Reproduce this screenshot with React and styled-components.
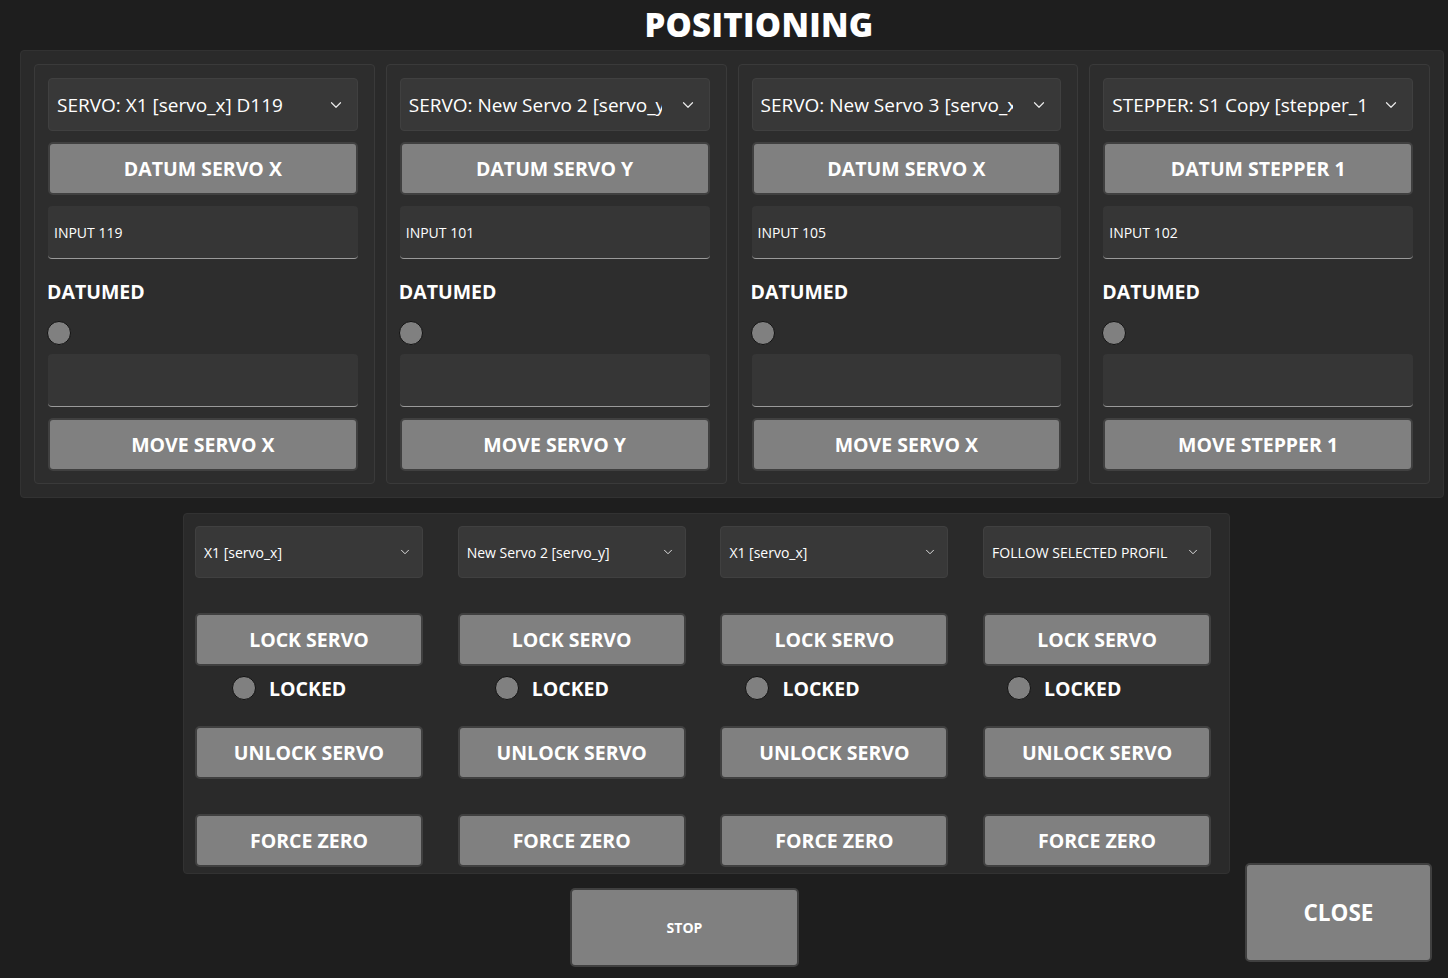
import React from "react";
import styled, { createGlobalStyle } from "styled-components";
import { ChevronDown } from "lucide-react";

const Global = createGlobalStyle`
  html, body { margin: 0; padding: 0; background: #1e1e1e; }
  body { font-family: "Open Sans", "Noto Sans", sans-serif; color: #fff; }
  * { box-sizing: border-box; }
`;

const Page = styled.div`
  width: 1448px;
  height: 978px;
  overflow: hidden;
  display: flex;
  flex-direction: column;
`;

const Title = styled.h1`
  margin: 0;
  height: 50px;
  padding-left: 70px;
  text-align: center;
  font-size: 33px;
  font-weight: 800;
  line-height: 50px;
  letter-spacing: 0.3px;
  color: #fff;
`;

const TopPanel = styled.div`
  margin: 0 4px 0 20px;
  padding: 13px 13px;
  background: #2a2a2a;
  border: 1px solid #323232;
  border-radius: 4px;
  display: grid;
  grid-template-columns: repeat(4, minmax(0, 1fr));
  column-gap: 11px;
`;

const Card = styled.div`
  min-width: 0;
  background: #2d2d2d;
  border: 1px solid #3a3a3a;
  border-radius: 4px;
  padding: 13px 16px 12px 13px;
  display: flex;
  flex-direction: column;
`;

const Select = styled.div`
  height: ${(p) => p.$h || 53}px;
  background: #383838;
  border: 1px solid #404040;
  border-radius: 4px;
  display: flex;
  align-items: center;
  padding: 0 ${(p) => p.$pr || 12}px 0 8px;
  font-size: ${(p) => p.$fs || 19}px;
  color: #fff;
  white-space: nowrap;
  overflow: hidden;
  svg { flex: none; color: #e8e8e8; }
`;

const SelectText = styled.span`
  overflow: hidden;
  flex: 1;
  min-width: 0;
  margin-right: ${(p) => p.$gap || 17}px;
`;

const Button = styled.div`
  height: ${(p) => p.$h || 53}px;
  margin-top: ${(p) => p.$mt || 0}px;
  background: #808080;
  border: 2px solid #404040;
  border-radius: 5px;
  display: flex;
  align-items: center;
  justify-content: center;
  font-size: ${(p) => p.$fs || 19.5}px;
  font-weight: 700;
  color: #fff;
  white-space: nowrap;
`;

const Input = styled.div`
  height: 53px;
  margin-top: ${(p) => p.$mt || 0}px;
  background: #363636;
  border-radius: 4px;
  border-bottom: 1px solid #9a9a9a;
  display: flex;
  align-items: center;
  padding-left: 6px;
  font-size: 14px;
  color: #fff;
`;

const Label = styled.div`
  margin-top: 20px;
  margin-left: -1px;
  height: 26px;
  line-height: 26px;
  font-size: 19.5px;
  font-weight: 700;
  color: #fff;
`;

const Led = styled.div`
  width: 24px;
  height: 24px;
  border-radius: 50%;
  background: #808080;
  border: 1.5px solid #111;
  flex: none;
  margin-top: ${(p) => p.$mt || 0}px;
  margin-left: ${(p) => p.$ml || 0}px;
`;

const BottomPanel = styled.div`
  margin: 15px 0 0 183px;
  width: 1047px;
  padding: 12px 18px 6px 11px;
  background: #2a2a2a;
  border: 1px solid #323232;
  border-radius: 4px;
  display: grid;
  grid-template-columns: repeat(4, 228px);
  column-gap: 34.7px;
`;

const Column = styled.div`
  display: flex;
  flex-direction: column;
  min-width: 0;
`;

const LockRow = styled.div`
  height: 24px;
  margin-top: 10px;
  padding-left: ${(p) => p.$pl}px;
  display: flex;
  align-items: center;
  gap: 13px;
  font-size: 19.5px;
  font-weight: 700;
`;

const Footer = styled.div`
  display: flex;
  align-items: flex-start;
`;

const Stop = styled(Button)`
  width: 229px;
  height: 79px;
  margin: 14px 0 0 570px;
  font-size: 14px;
`;

const Close = styled(Button)`
  width: 187px;
  height: 99px;
  margin: -11px 0 0 446px;
  font-size: 22.5px;
`;

const cards = [
  { sel: "SERVO: X1 [servo_x] D119", datum: "DATUM SERVO X", input: "INPUT 119", move: "MOVE SERVO X" },
  { sel: "SERVO: New Servo 2 [servo_y]", datum: "DATUM SERVO Y", input: "INPUT 101", move: "MOVE SERVO Y" },
  { sel: "SERVO: New Servo 3 [servo_x]", datum: "DATUM SERVO X", input: "INPUT 105", move: "MOVE SERVO X" },
  { sel: "STEPPER: S1 Copy [stepper_1]", datum: "DATUM STEPPER 1", input: "INPUT 102", move: "MOVE STEPPER 1" },
];

const cols = [
  { sel: "X1 [servo_x]", pl: 37 },
  { sel: "New Servo 2 [servo_y]", pl: 37 },
  { sel: "X1 [servo_x]", pl: 25 },
  { sel: "FOLLOW SELECTED PROFILE", pl: 24 },
];

export default function App() {
  return (
    <Page>
      <Global />
      <Title>POSITIONING</Title>
      <TopPanel>
        {cards.map((c, i) => (
          <Card key={i}>
            <Select>
              <SelectText>{c.sel}</SelectText>
              <ChevronDown size={18} strokeWidth={1.6} />
            </Select>
            <Button $mt={11}>{c.datum}</Button>
            <Input $mt={11}>{c.input}</Input>
            <Label>DATUMED</Label>
            <Led $mt={16} $ml={-1} />
            <Input $mt={9} />
            <Button $mt={11}>{c.move}</Button>
          </Card>
        ))}
      </TopPanel>
      <BottomPanel>
        {cols.map((c, i) => (
          <Column key={i}>
            <Select $h={52} $fs={14} $pr={10}>
              <SelectText $gap={18}>{c.sel}</SelectText>
              <ChevronDown size={14} strokeWidth={1.6} />
            </Select>
            <Button $mt={35}>LOCK SERVO</Button>
            <LockRow $pl={c.pl}>
              <Led />
              <span>LOCKED</span>
            </LockRow>
            <Button $mt={26}>UNLOCK SERVO</Button>
            <Button $mt={35}>FORCE ZERO</Button>
          </Column>
        ))}
      </BottomPanel>
      <Footer>
        <Stop>STOP</Stop>
        <Close>CLOSE</Close>
      </Footer>
    </Page>
  );
}
